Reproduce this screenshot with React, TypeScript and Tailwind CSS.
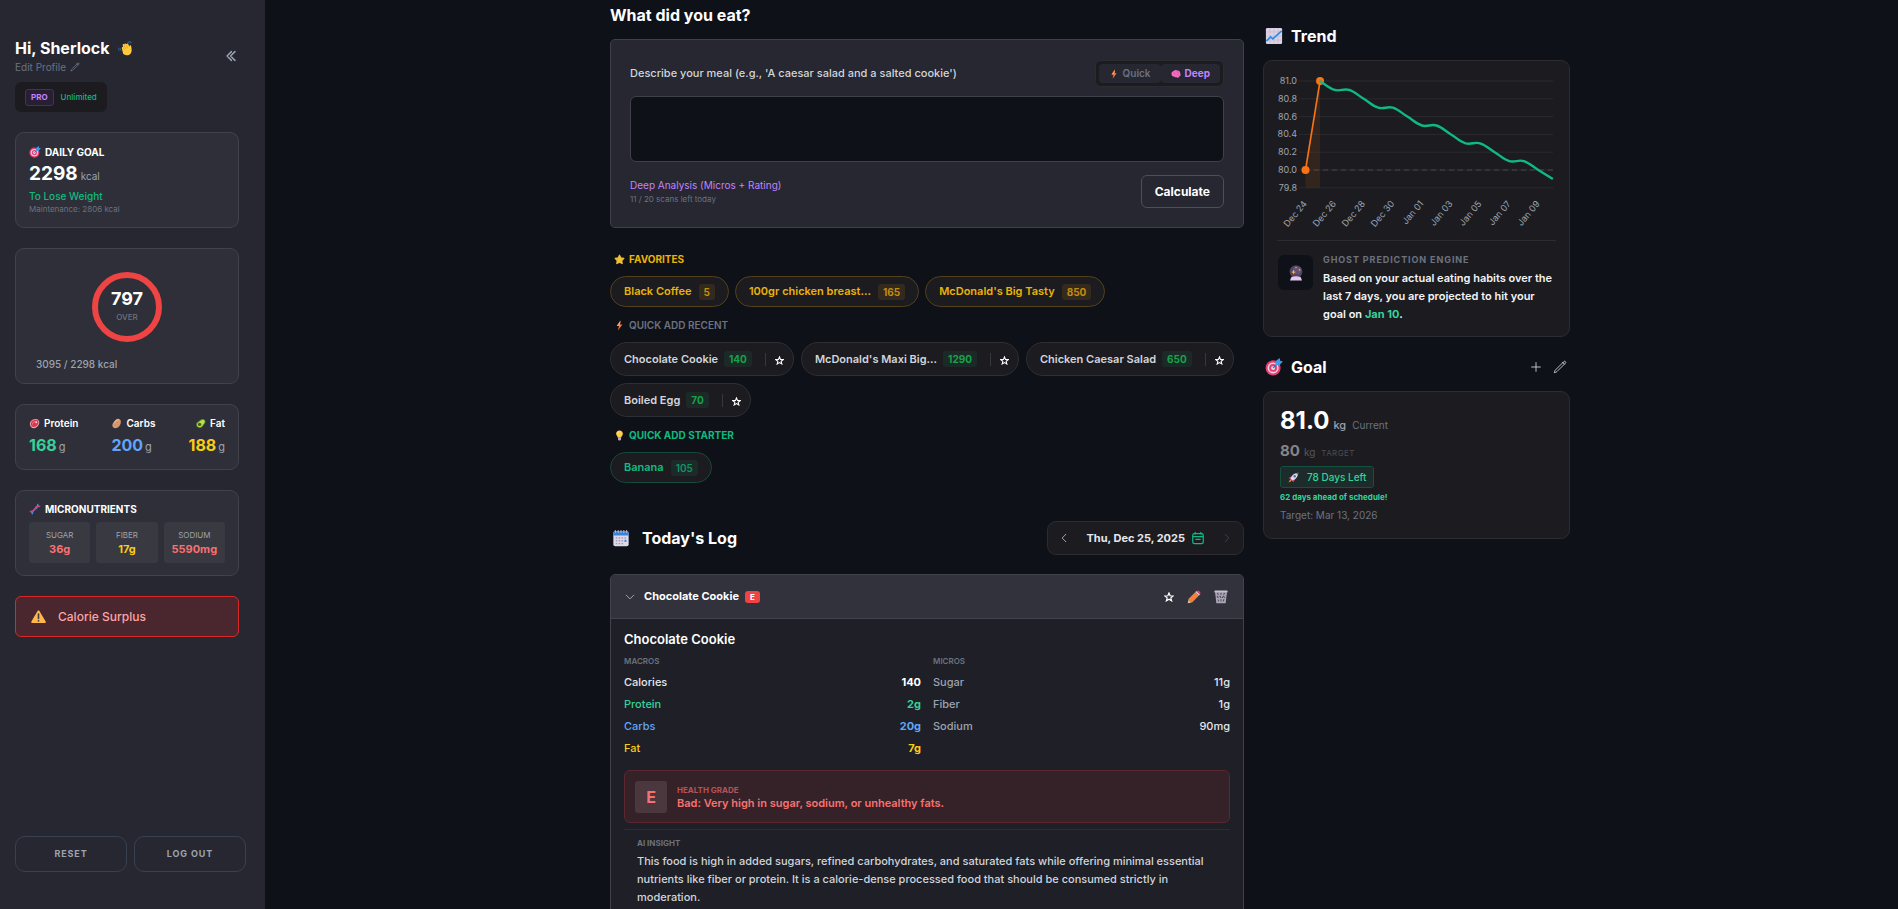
import type {ReactNode} from 'react';
import {
  HiOutlineChevronDoubleLeft,
  HiOutlineChevronDown,
  HiOutlineChevronLeft,
  HiOutlineChevronRight,
  HiOutlinePencil,
  HiOutlinePlus,
} from 'react-icons/hi2';

interface QuickItem {
  name: string;
  kcal: number;
}

interface NutrientRow {
  label: string;
  value: string;
  labelClass: string;
  valueClass: string;
}

const favorites: QuickItem[] = [
  {name: 'Black Coffee', kcal: 5},
  {name: '100gr chicken breast...', kcal: 165},
  {name: "McDonald's Big Tasty", kcal: 850},
];

const recents: QuickItem[] = [
  {name: 'Chocolate Cookie', kcal: 140},
  {name: "McDonald's Maxi Big...", kcal: 1290},
  {name: 'Chicken Caesar Salad', kcal: 650},
  {name: 'Boiled Egg', kcal: 70},
];

const macros: NutrientRow[] = [
  {label: 'Calories', value: '140', labelClass: 'text-gray-200', valueClass: 'text-white font-bold'},
  {label: 'Protein', value: '2g', labelClass: 'text-[#34d399]', valueClass: 'text-[#34d399] font-bold'},
  {label: 'Carbs', value: '20g', labelClass: 'text-[#60a5fa]', valueClass: 'text-[#60a5fa] font-bold'},
  {label: 'Fat', value: '7g', labelClass: 'text-[#facc15]', valueClass: 'text-[#facc15] font-bold'},
];

const micros: NutrientRow[] = [
  {label: 'Sugar', value: '11g', labelClass: 'text-[#9ca3af]', valueClass: 'text-gray-200 font-medium'},
  {label: 'Fiber', value: '1g', labelClass: 'text-[#9ca3af]', valueClass: 'text-gray-200 font-medium'},
  {label: 'Sodium', value: '90mg', labelClass: 'text-[#9ca3af]', valueClass: 'text-gray-200 font-medium'},
];

const sidebarCard = 'rounded-[9px] border border-[#41424b] bg-[#2e2f38]';
const panel = 'rounded-[9px] border border-[#2b2b30] bg-[#1c1c20]';

const App = () => (
  <div className="flex h-screen overflow-hidden bg-[#0e1117] font-['Inter',sans-serif] text-white">
    <Sidebar />
    <main className="flex flex-1 justify-center overflow-y-auto pl-[17px] [scrollbar-width:none]">
      <div className="flex w-full max-w-[960px] items-start gap-[19px]">
        <div className="min-w-0 flex-1 pt-[3px]">
          <MealForm />
          <QuickAdd />
          <TodaysLog />
        </div>
        <div className="w-[307px] shrink-0 pt-6">
          <Trend />
          <Goal />
        </div>
      </div>
    </main>
  </div>
);

export default App;

const Sidebar = () => (
  <aside className="flex w-[265px] shrink-0 flex-col bg-[#262730] pt-9 pl-[15px]">
    <div className="flex flex-1 flex-col gap-5 pr-[26px]">
      <div>
        <div className="flex items-center justify-between">
          <div>
            <h1 className="flex items-center gap-2 text-base leading-6 font-bold">
              Hi, Sherlock
              <WaveEmoji className="size-[15px]" />
            </h1>
            <a href="#profile" className="flex items-center gap-1 text-[10px] leading-3.5 text-[#6b7280]">
              Edit Profile
              <HiOutlinePencil className="size-2.5 stroke-2" />
            </a>
          </div>
          <button aria-label="Collapse sidebar" className="mt-0.5 mr-px text-[#9ca3af]">
            <HiOutlineChevronDoubleLeft className="size-3.5 stroke-[2.5]" />
          </button>
        </div>
        <div className="mt-2 inline-flex h-[30px] items-center gap-[7px] rounded-md bg-[#1c1c20] px-2.5 align-top">
          <span className="rounded-[3px] border border-[#4b2c66] bg-[#281f35] px-[5px] text-[8px] leading-[15px] font-bold text-[#c084fc]">
            PRO
          </span>
          <span className="text-[8px] leading-4 font-medium text-[#10b981]">Unlimited</span>
        </div>
      </div>

      <section className={`${sidebarCard} px-[13px] py-3`}>
        <h2 className="flex items-center gap-1 text-[10px] leading-3.5 font-bold">
          <TargetEmoji className="size-3" />
          DAILY GOAL
        </h2>
        <p className="mt-0.5 flex items-baseline gap-[3px] text-[19px] leading-[26px] font-bold">
          2298 <span className="text-[10px] leading-none font-normal text-[#9ca3af]">kcal</span>
        </p>
        <p className="mt-0.5 text-[10px] leading-3.5 font-medium text-[#10b981]">To Lose Weight</p>
        <p className="text-[8px] leading-3 text-[#6b7280]">Maintenance: 2806 kcal</p>
      </section>

      <section className={`${sidebarCard} px-5 pt-[23px] pb-3`}>
        <div className="mx-auto grid size-[70px] place-content-center rounded-full border-[6px] border-[#ef4444] text-center">
          <p className="text-lg leading-5 font-bold">797</p>
          <p className="text-[8px] leading-4 font-medium text-[#6b7280]">OVER</p>
        </div>
        <p className="mt-[15px] text-[10px] leading-3.5 font-medium text-[#9ca3af]">3095 / 2298 kcal</p>
      </section>

      <section className={`${sidebarCard} flex justify-between px-[13px] pt-[11px] pb-[13px]`}>
        <Macro name="Protein" value={168} color="text-[#34d399]" icon={<MeatEmoji className="size-[11px]" />} />
        <Macro name="Carbs" value={200} color="text-[#60a5fa]" icon={<PotatoEmoji className="size-[11px]" />} />
        <Macro name="Fat" value={188} color="text-[#facc15]" icon={<AvocadoEmoji className="size-[11px]" />} right />
      </section>

      <section className={`${sidebarCard} px-[13px] pt-[11px] pb-3`}>
        <h2 className="flex items-center gap-1 text-[10px] leading-3.5 font-bold">
          <DnaEmoji className="size-3" />
          MICRONUTRIENTS
        </h2>
        <div className="mt-1.5 grid grid-cols-3 gap-1.5">
          <Micro name="SUGAR" value="36g" color="text-[#f87171]" />
          <Micro name="FIBER" value="17g" color="text-[#facc15]" />
          <Micro name="SODIUM" value="5590mg" color="text-[#f87171]" />
        </div>
      </section>

      <div className="flex h-[41px] items-center gap-3 rounded-md border border-[#dc2626] bg-[#4a262e] pl-[15px]">
        <WarningEmoji className="size-[15px]" />
        <p className="text-xs font-medium text-[#fca5a5]">Calorie Surplus</p>
      </div>
    </div>

    <div className="mb-[37px] flex gap-[7px] pr-[19px]">
      <button className="h-9 flex-1 rounded-[10px] border border-[#374151] text-[9px] font-bold tracking-widest text-[#9ca3af]">
        RESET
      </button>
      <button className="h-9 flex-1 rounded-[10px] border border-[#374151] text-[9px] font-bold tracking-widest text-[#9ca3af]">
        LOG OUT
      </button>
    </div>
  </aside>
);

const Macro = ({
  name,
  value,
  color,
  icon,
  right,
}: {
  name: string;
  value: number;
  color: string;
  icon: ReactNode;
  right?: boolean;
}) => (
  <div className={right ? 'flex flex-col items-end' : 'flex flex-col items-start'}>
    <p className="flex items-center gap-1 text-[10px] leading-3.5 font-semibold">
      {icon}
      {name}
    </p>
    <p className={`mt-1 flex items-baseline gap-0.5 text-base leading-[22px] font-bold ${color}`}>
      {value}
      <span className="text-[11px] leading-none font-normal text-[#9ca3af]">g</span>
    </p>
  </div>
);

const Micro = ({name, value, color}: {name: string; value: string; color: string}) => (
  <div className="flex h-[41px] flex-col items-center justify-center rounded-[3px] bg-[#383941]">
    <p className="text-[8px] leading-3 text-[#9ca3af]">{name}</p>
    <p className={`text-[11px] leading-4 font-bold ${color}`}>{value}</p>
  </div>
);

const MealForm = () => (
  <section>
    <h2 className="text-base leading-6 font-bold">What did you eat?</h2>
    <form className="mt-3 rounded-[5px] border border-[#3f4049] bg-[#262730] px-[19px] pt-5 pb-[19px]">
      <div className="flex items-center justify-between">
        <label htmlFor="meal" className="text-[11px] font-medium text-gray-300">
          Describe your meal (e.g., 'A caesar salad and a salted cookie')
        </label>
        <div className="flex rounded-md border border-[#2b2b32] bg-[#1c1c20] p-[3px]">
          <button
            type="button"
            className="flex h-[19px] items-center gap-1 rounded bg-[#262730] px-2.5 text-[10px] font-semibold text-[#6b7280]"
          >
            <BoltEmoji className="size-2.5" />
            Quick
          </button>
          <button
            type="button"
            className="flex h-[19px] items-center gap-1 rounded bg-[#262730] px-2.5 text-[10px] font-bold text-[#c084fc]"
          >
            <BrainEmoji className="size-2.5" />
            Deep
          </button>
        </div>
      </div>
      <textarea
        id="meal"
        className="mt-[9px] block h-[66px] w-full resize-none rounded-md border border-[#3f4049] bg-[#0e1117] p-2 text-xs"
      />
      <div className="mt-[13px] flex items-center justify-between">
        <div>
          <p className="text-[10px] leading-3.5 text-[#c084fc]">Deep Analysis (Micros + Rating)</p>
          <p className="text-[8px] leading-3.5 text-[#6b7280]">11 / 20 scans left today</p>
        </div>
        <button
          type="button"
          className="h-[33px] rounded-md border border-[#4d4e57] px-[13px] text-xs font-bold"
        >
          Calculate
        </button>
      </div>
    </form>
  </section>
);

const QuickAdd = () => (
  <section>
    <h3 className="mt-6 flex items-center gap-1 pl-1 text-[10px] leading-3.5 font-bold text-[#eab308]">
      <StarEmoji className="size-[11px]" />
      FAVORITES
    </h3>
    <div className="mt-2.5 flex flex-wrap gap-1.5">
      {favorites.map(item => (
        <button
          key={item.name}
          className="flex h-[31px] items-center gap-[7px] rounded-full border border-[#54401a] bg-[#1c1c20] px-[13px] text-[11px] font-semibold text-[#eab308]"
        >
          {item.name}
          <span className="rounded-[3px] bg-[#33291d] px-[5px] text-[10px] leading-4 font-bold text-[#c48c0c]">
            {item.kcal}
          </span>
        </button>
      ))}
    </div>

    <h3 className="mt-[11px] flex items-center gap-1 pl-1 text-[10px] leading-3.5 font-semibold text-[#6b7280]">
      <BoltEmoji className="size-[11px]" />
      QUICK ADD RECENT
    </h3>
    <div className="mt-2.5 flex flex-wrap gap-[7px]">
      {recents.map(item => (
        <div
          key={item.name}
          className="flex h-[34px] items-center rounded-full border border-[#2e2e33] bg-[#1c1c20] pr-[9px] pl-[13px]"
        >
          <button className="flex items-center gap-1.5 text-[11px] font-semibold text-gray-300">
            {item.name}
            <span className="rounded-[3px] bg-[#1c2a27] px-[5px] text-[10px] leading-4 font-bold text-[#16a34a]">
              {item.kcal}
            </span>
          </button>
          <span className="ml-[13px] h-[13px] w-px bg-[#36363c]" />
          <button aria-label={`Favorite ${item.name}`} className="mt-0.5 ml-[9px]">
            <StarOutline className="size-[9px]" />
          </button>
        </div>
      ))}
    </div>

    <h3 className="mt-[11px] flex items-center gap-1 pl-1 text-[10px] leading-3.5 font-bold text-[#10b981]">
      <BulbEmoji className="size-[11px]" />
      QUICK ADD STARTER
    </h3>
    <button className="mt-2.5 flex h-[31px] items-center gap-[7px] rounded-full border border-[#16483c] bg-[#1c1c20] px-[13px] text-[11px] font-semibold text-[#10b981]">
      Banana
      <span className="rounded-[3px] bg-[#1c2a29] px-[5px] text-[10px] leading-4 font-semibold text-[#0f9468]">105</span>
    </button>
  </section>
);

const TodaysLog = () => (
  <section>
    <div className="mt-[38px] flex items-center justify-between">
      <h2 className="flex items-center gap-3 pl-0.5 text-base font-bold">
        <CalendarEmoji className="size-[18px]" />
        Today's Log
      </h2>
      <div className="flex h-[34px] items-center rounded-[9px] border border-[#2b2b30] bg-[#1c1c20] px-2.5">
        <button aria-label="Previous day" className="text-[#9ca3af]">
          <HiOutlineChevronLeft className="size-3 stroke-2" />
        </button>
        <button className="ml-4 flex items-center gap-1.5 text-[11px] font-bold text-gray-200">
          Thu, Dec 25, 2025
          <CalendarIcon />
        </button>
        <button aria-label="Next day" disabled className="ml-4 text-[#374151]">
          <HiOutlineChevronRight className="size-3 stroke-2" />
        </button>
      </div>
    </div>

    <article className="mt-[19px] overflow-hidden rounded-[5px] border border-[#41424b] bg-[#1e1f27]">
      <header className="flex h-11 items-center border-b border-[#41424b] bg-[#31323c] px-[13px]">
        <HiOutlineChevronDown className="size-3 stroke-2 text-[#9ca3af]" />
        <h3 className="ml-2 text-[11px] font-bold">Chocolate Cookie</h3>
        <span className="ml-1.5 rounded-[3px] bg-[#ef4444] px-[5px] text-[8px] leading-3 font-bold">E</span>
        <div className="mr-0.5 ml-auto flex items-center gap-[13px]">
          <button aria-label="Favorite">
            <StarOutline className="size-2.5" />
          </button>
          <button aria-label="Edit entry">
            <PencilEmoji className="size-3.5" />
          </button>
          <button aria-label="Delete entry">
            <TrashEmoji className="size-3.5" />
          </button>
        </div>
      </header>

      <div className="px-[13px] pt-[11px] pb-6">
        <h4 className="text-[13px] leading-[18px] font-semibold">Chocolate Cookie</h4>
        <div className="mt-[7px] grid grid-cols-2 items-start gap-3">
          <NutrientTable title="MACROS" rows={macros} />
          <NutrientTable title="MICROS" rows={micros} />
        </div>

        <div className="mt-[11px] flex h-[53px] items-center gap-2.5 rounded-md border border-[#5b2630] bg-[#352228] px-2.5">
          <span className="grid size-8 place-items-center rounded-[3px] bg-[#4a383e] text-base font-bold text-[#f87171]">
            E
          </span>
          <div>
            <p className="text-[8px] leading-3 font-bold text-[#b45458]">HEALTH GRADE</p>
            <p className="text-[11px] leading-3.5 font-semibold text-[#f87171]">
              Bad: Very high in sugar, sodium, or unhealthy fats.
            </p>
          </div>
        </div>

        <div className="mt-1.5 border-t border-[#2b2c34] px-[13px] pt-[7px]">
          <h5 className="text-[8px] leading-3 font-bold text-[#6b7280]">AI INSIGHT</h5>
          <p className="mt-[3px] text-[11px] leading-[18px] font-medium text-gray-300">
            This food is high in added sugars, refined carbohydrates, and saturated fats while offering minimal
            essential nutrients like fiber or protein. It is a calorie-dense processed food that should be consumed
            strictly in moderation.
          </p>
        </div>
      </div>
    </article>
  </section>
);

const NutrientTable = ({title, rows}: {title: string; rows: NutrientRow[]}) => (
  <table className="w-full text-[11px]">
    <caption className="pb-1 text-left text-[8px] leading-3 font-semibold text-[#6b7280]">{title}</caption>
    <tbody>
      {rows.map(row => (
        <tr key={row.label}>
          <th scope="row" className={`h-[22px] text-left font-medium ${row.labelClass}`}>
            {row.label}
          </th>
          <td className={`text-right ${row.valueClass}`}>{row.value}</td>
        </tr>
      ))}
    </tbody>
  </table>
);

const Trend = () => (
  <section>
    <h2 className="flex items-center gap-2 pl-0.5 text-base leading-6 font-bold">
      <ChartEmoji className="size-[18px]" />
      Trend
    </h2>
    <div className={`${panel} mt-3 px-[13px] pt-3 pb-[13px]`}>
      <WeightChart />
      <div className="mt-2.5 flex gap-2.5 border-t border-[#2b2b30] pt-3">
        <div className="mt-0.5 ml-px grid size-[35px] shrink-0 place-items-center rounded-md bg-[#0e1117]">
          <CrystalBallEmoji className="size-4" />
        </div>
        <div>
          <h3 className="text-[9px] leading-3.5 font-bold tracking-widest text-[#6b7280]">GHOST PREDICTION ENGINE</h3>
          <p className="mt-0.5 text-[11px] leading-[18px] font-semibold text-gray-100">
            Based on your actual eating habits over the last 7 days, you are projected to hit your goal on{' '}
            <span className="font-bold text-[#34d399]">Jan 10</span>.
          </p>
        </div>
      </div>
    </div>
  </section>
);

const ticks = [81.0, 80.8, 80.6, 80.4, 80.2, 80.0, 79.8];
const days = ['Dec 24', 'Dec 26', 'Dec 28', 'Dec 30', 'Jan 01', 'Jan 03', 'Jan 05', 'Jan 07', 'Jan 09'];
const projection = [81, 80.9, 80.9, 80.8, 80.7, 80.7, 80.6, 80.5, 80.5, 80.4, 80.3, 80.3, 80.2, 80.1, 80.1, 80, 79.9];

const xAt = (day: number) => 28.5 + day * 14.55;
const yAt = (kg: number) => 8 + (81 - kg) * 89;

function smoothPath(values: number[], firstDay: number) {
  const pts = values.map((kg, i) => [xAt(firstDay + i), yAt(kg)]);
  const at = (i: number) => pts[Math.min(Math.max(i, 0), pts.length - 1)];
  return pts.slice(1).reduce((d, [x, y], i) => {
    const [x0, y0] = pts[i];
    const before = at(i - 1);
    const after = at(i + 2);
    const c1 = `${x0 + (x - before[0]) * 0.2} ${y0 + (y - before[1]) * 0.2}`;
    const c2 = `${x - (after[0] - x0) * 0.2} ${y - (after[1] - y0) * 0.2}`;
    return `${d} C${c1} ${c2} ${x} ${y}`;
  }, `M${pts[0][0]} ${pts[0][1]}`);
}

const WeightChart = () => (
  <svg viewBox="0 0 279 157" className="block w-full" role="img" aria-label="Weight trend">
    {ticks.map(tick => (
      <g key={tick}>
        <line x1="22" x2="276" y1={yAt(tick)} y2={yAt(tick)} stroke="#29292e" />
        <text x="20" y={yAt(tick) + 3} textAnchor="end" fontSize="9" fill="#9ca3af">
          {tick.toFixed(1)}
        </text>
      </g>
    ))}
    <line x1="28" x2="276" y1={yAt(80)} y2={yAt(80)} stroke="#46464b" strokeDasharray="5 4" />
    {days.map((day, i) => (
      <text
        key={day}
        x={xAt(i * 2) + 2}
        y="131"
        textAnchor="end"
        fontSize="9"
        fill="#9ca3af"
        transform={`rotate(-50 ${xAt(i * 2) + 2} 131)`}
      >
        {day}
      </text>
    ))}
    <path d={`M${xAt(0)} ${yAt(80)}L${xAt(1)} ${yAt(81)}V${yAt(79.8)}H${xAt(0)}Z`} fill="#f97316" fillOpacity=".1" />
    <path d={`M${xAt(0)} ${yAt(80)}L${xAt(1)} ${yAt(81)}`} stroke="#f97316" strokeWidth="1.6" />
    <circle cx={xAt(0)} cy={yAt(80)} r="4" fill="#f97316" />
    <circle cx={xAt(1)} cy={yAt(81)} r="4" fill="#f97316" />
    <path d={smoothPath(projection, 1)} fill="none" stroke="#10b981" strokeWidth="2.4" />
  </svg>
);

const Goal = () => (
  <section className="mt-[18px]">
    <div className="flex items-center justify-between pr-[3px] pl-0.5">
      <h2 className="flex items-center gap-2 text-base leading-6 font-bold">
        <TargetEmoji className="size-[18px]" />
        Goal
      </h2>
      <div className="flex gap-2.5 text-gray-300">
        <button aria-label="Add weight">
          <HiOutlinePlus className="size-3.5" />
        </button>
        <button aria-label="Edit goal">
          <HiOutlinePencil className="size-3.5" />
        </button>
      </div>
    </div>
    <div className={`${panel} mt-3 px-4 pt-[13px] pb-[15px]`}>
      <p className="flex items-baseline text-2xl leading-8 font-bold">
        81.0
        <span className="ml-1 text-[11px] leading-none font-medium text-[#9ca3af]">kg</span>
        <span className="ml-1.5 text-[10px] leading-none font-normal text-[#6b7280]">Current</span>
      </p>
      <p className="mt-0.5 flex items-baseline text-[15px] leading-6 font-bold text-[#85858a]">
        80
        <span className="ml-1 text-[10px] leading-none font-normal text-[#55555c]">kg</span>
        <span className="ml-1.5 text-[8px] leading-none font-normal tracking-wider text-[#4b4b55]">TARGET</span>
      </p>
      <p className="mt-[3px] flex h-[22px] w-fit items-center gap-2 rounded-[3px] border border-[#13503f] bg-[#1b2c2a] px-[7px] text-[10px] font-medium text-[#34d399]">
        <RocketEmoji className="size-[11px]" />
        78 Days Left
      </p>
      <p className="mt-[3px] text-[8px] leading-3 font-bold text-[#34d399]">62 days ahead of schedule!</p>
      <p className="mt-1 text-[10px] leading-4 text-[#6b7280]">Target: Mar 13, 2026</p>
    </div>
  </section>
);

interface IconProps {
  className: string;
}

const Emoji = ({className, children}: IconProps & {children: ReactNode}) => (
  <svg viewBox="0 0 16 16" className={`shrink-0 ${className}`} aria-hidden="true">
    {children}
  </svg>
);

const StarOutline = ({className}: IconProps) => (
  <Emoji className={className}>
    <path
      d="M8 1.5l1.800 4.500 4.900.3-3.800 3.100 1.300 4.800L8 11.600l-4.200 2.600 1.300-4.800L1.300 6.300l4.900-.3z"
      fill="none"
      stroke="#fff"
      strokeWidth="1.9"
    />
  </Emoji>
);

const CalendarIcon = () => (
  <svg viewBox="0 0 16 16" className="size-3.5" fill="none" stroke="#10b981" strokeWidth="1.4" aria-hidden="true">
    <rect x="2" y="3" width="12" height="11.5" rx="2" />
    <path d="M4.800 1v3M11.200 1v3M2 6.500h12M5 9.500h6" />
  </svg>
);

const WaveEmoji = ({className}: IconProps) => (
  <Emoji className={className}>
    <path
      d="M4.200 8.200C3.600 6.600 5 6 5.600 7L5 4.600c-.3-1.500 1.300-1.800 1.800-.6-.1-1.600 1.600-1.900 2.200-.5.5-1.200 1.900-.8 2.200.3L12 6c.3-1.600 2-2 2.100-.3.4 2.700 1.100 5.400-.5 7.500-2 2.600-6.600 2.600-8.200.2z"
      fill="#ffc83d"
    />
    <path d="M6.700 4.500l1.400 3.800M9 4l1.200 3.800M5.500 7.200l1.600 2.300" stroke="#f0931e" strokeWidth=".6" />
    <path
      d="M1 7.200q-.6 1.600.4 3M2.800 8q-.4 1.200.3 2.200M10 1.200q2-.2 2.800 1.500M12 .4q1.800.3 2.400 1.800"
      stroke="#2879b8"
      strokeWidth=".9"
      fill="none"
    />
  </Emoji>
);

const TargetEmoji = ({className}: IconProps) => (
  <Emoji className={className}>
    <circle cx="7.2" cy="8.8" r="6.7" fill="#e23f73" />
    <circle cx="7.2" cy="8.8" r="4.9" fill="#e9d5e5" />
    <circle cx="7.2" cy="8.8" r="3.5" fill="#e23f73" />
    <circle cx="7.2" cy="8.8" r="1.8" fill="#e9d5e5" />
    <path d="M7.2 8.8L12 4" stroke="#2f6ea5" strokeWidth="1.1" />
    <path d="M9.400 6.400l.2-3.700L13 .1l.5 2.400 2.400.5-2.900 3.200z" fill="#3f9be8" />
  </Emoji>
);

const MeatEmoji = ({className}: IconProps) => (
  <Emoji className={className}>
    <path d="M1.200 9.200C1 5 4.500 1.500 9 1.300c4-.2 6.400 2 6 5.400-.4 4-3.300 8-7.600 8.200-3.400.2-6-2.200-6.200-5.700z" fill="#f2a1a8" />
    <path d="M2.600 8.800C2.600 5.400 5.400 2.800 9 2.600c3.200-.2 5 1.300 4.700 4-.4 3.400-2.900 6.400-6.200 6.600-2.900.2-4.900-1.600-4.900-4.400z" fill="#d9374f" />
    <path d="M5 9.500C5 6.800 7 5 9.500 4.800" stroke="#f2a1a8" fill="none" />
    <circle cx="10.500" cy="6.200" r="1.400" fill="#f8dcd8" />
  </Emoji>
);

const PotatoEmoji = ({className}: IconProps) => (
  <Emoji className={className}>
    <path d="M3 13.300C1.200 11.200 1.800 8.300 3.800 6.200 5.600 3.500 8.300.8 11.400 1.300c3 .5 3.600 3.800 2.500 7-1 3-3 5.800-6 6.300-2 .4-3.800-.1-4.900-1.300z" fill="#d99a72" />
    <path d="M5 6.500C6.700 4 9 2.200 11.200 2.600" stroke="#f3c3a2" strokeWidth="1.400" fill="none" />
    <path d="M9 6.500l.9.6M6 10l1 .4M10.500 10l.6-.4" stroke="#8d5638" strokeWidth=".9" />
  </Emoji>
);

const AvocadoEmoji = ({className}: IconProps) => (
  <Emoji className={className}>
    <path d="M1.500 9.500c0-3.300 2.500-3.700 4.500-5.500C8 2 10.600.7 13 1.700s3 4 1.600 6c-1.300 1.800-2.100 3-3.600 5-2.700 3-9.500 2.300-9.500-3.200z" fill="#3f8a28" />
    <path d="M2.900 9.500c0-2.700 2.300-3 4.200-4.800C8.700 3.100 10.800 2 12.600 2.800s2.100 2.900 1 4.400c-1.300 1.800-2.100 2.900-3.500 4.700-2.100 2.400-7.200 1.900-7.200-2.400z" fill="#b7e04c" />
    <circle cx="6.700" cy="9.300" r="2.500" fill="#6b4a22" />
  </Emoji>
);

const DnaEmoji = ({className}: IconProps) => (
  <Emoji className={className}>
    <path d="M4.500 15.200C4 11.500 5.500 9.500 8 8.200s4-3.500 3.500-7" stroke="#3d8fe0" strokeWidth="1.900" fill="none" />
    <path d="M1 11.300c4 .7 5.500-.8 6.700-3.300s3-4.200 7.300-3.300" stroke="#d0407b" strokeWidth="2" fill="none" />
    <path d="M2.800 11.800l2 2.200M5.500 10.500l1 .8M9.200 5.200l1.200.8M11.600 2.800l2 2" stroke="#8f72d8" strokeWidth="1.200" />
  </Emoji>
);

const WarningEmoji = ({className}: IconProps) => (
  <Emoji className={className}>
    <path d="M7 2.200q1-1.600 2 0l6.600 11.200q.7 1.400-.9 1.400H1.300q-1.600 0-.9-1.400z" fill="#ffb84a" />
    <path d="M8 5.500v4.700" stroke="#433b46" strokeWidth="1.700" strokeLinecap="round" />
    <circle cx="8" cy="12.600" r="1" fill="#433b46" />
  </Emoji>
);

const BoltEmoji = ({className}: IconProps) => (
  <Emoji className={className}>
    <path d="M9.500.8L4 8.600h3.200L5.800 15.400l6.400-8.700H8.700z" fill="#f5793b" />
    <path d="M9.500.8L4 8.600h3.200l1.500-1.900z" fill="#ff9d5c" />
  </Emoji>
);

const BrainEmoji = ({className}: IconProps) => (
  <Emoji className={className}>
    <path
      d="M1 9C0 6 2 3.500 4.200 3.200 6 1.300 9 1.300 10.500 2.500c2.500 0 4.300 2 4.300 4.200 1 2 .6 4.300-1.300 5-.5 2.500-3 3-4.300 1.300-1.800.6-3.500 0-4-1.200C3.200 12.300 1.500 11 1 9z"
      fill="#f56cc1"
    />
    <path d="M4 6.500c1.500-1.500 3 .5 2.500 2M8.500 4.500c2-.8 3.500.6 3 2.500M9 9.500c1.500-1 3-.5 3.500.8" stroke="#b83b90" strokeWidth=".8" fill="none" />
  </Emoji>
);

const StarEmoji = ({className}: IconProps) => (
  <Emoji className={className}>
    <path
      d="M8 1.800l2 3.900 4.300.7-3 3.100.6 4.400L8 12l-3.900 1.900.6-4.400-3-3.100 4.300-.7z"
      fill="#efc13a"
      stroke="#efc13a"
      strokeWidth="1.800"
      strokeLinejoin="round"
    />
  </Emoji>
);

const BulbEmoji = ({className}: IconProps) => (
  <Emoji className={className}>
    <path d="M8 .8c3 0 4.900 2.200 4.900 4.800 0 2.400-2 3.500-2.500 5.600H5.600C5.100 9.100 3.100 8 3.100 5.600 3.100 3 5 .8 8 .8z" fill="#ffcf4a" />
    <path d="M5 5.500C5 4 6 2.800 7.500 2.600" stroke="#fff1b8" fill="none" />
    <path d="M5.800 11.200h4.400v2.600q0 1.400-2.200 1.400t-2.200-1.400z" fill="#b9a8c4" />
  </Emoji>
);

const CalendarEmoji = ({className}: IconProps) => (
  <Emoji className={className}>
    <rect x="1.200" y="2" width="13.600" height="13.300" rx="1.700" fill="#dfd8ea" />
    <path d="M1.200 5.800V3.500Q1.200 2 2.800 2h10.400q1.600 0 1.600 1.500v2.300z" fill="#3285dd" />
    <path d="M3 .8v2.800M5.500.8v2.800M8 .8v2.800M10.500.8v2.800M13 .8v2.800" stroke="#b7b2cc" strokeWidth=".9" />
    <path d="M3.300 8h9.400M3.300 10.500h9.400M3.300 13h7" stroke="#a19dba" strokeWidth="1.300" strokeDasharray="1.400 1.200" />
    <path d="M11.200 10.500h1.600" stroke="#3285dd" strokeWidth="1.700" />
  </Emoji>
);

const PencilEmoji = ({className}: IconProps) => (
  <Emoji className={className}>
    <path d="M.8 15.200l1-4.300 3.300 3.300z" fill="#e9c39d" />
    <path d="M1.400 10.500L9.600 2.300 13.700 6.400l-8.200 8.200z" fill="#f5813c" />
    <path d="M9.600 2.300l1.200-1.200 4.100 4.100-1.200 1.200z" fill="#d5cfe0" />
    <path d="M10.800 1.100q1.700-1.500 3.500.4t.6 3.700z" fill="#e8434f" />
  </Emoji>
);

const TrashEmoji = ({className}: IconProps) => (
  <Emoji className={className}>
    <path d="M1.200 2.500h13.600l-1.500 12.700H2.700z" fill="#aaa5b5" />
    <path
      d="M4 3.500l1 2M8 3.500v2M12 3.500l-1 2M3.500 7l1.500 2M6.500 6.500L8 9M9.500 9L11 6.500M4.500 11l1 2M8 10.500v2.500M11.500 10.500l-1 2.500M12.500 7.500l-.5 1.500"
      stroke="#484655"
      strokeWidth="1.200"
    />
    <rect x=".4" y=".6" width="15.200" height="2.300" rx="1" fill="#c6c1d0" />
  </Emoji>
);

const ChartEmoji = ({className}: IconProps) => (
  <Emoji className={className}>
    <rect x=".8" y=".8" width="14.400" height="14.400" rx="1.200" fill="#ded3e6" />
    <path d="M4.400 1v14M8 1v14M11.600 1v14M1 4.400h14M1 8h14M1 11.600h14" stroke="#c4b6d1" strokeWidth=".6" />
    <path d="M1.200 12.600L5 8.800l2 1.800 7.800-7.200" stroke="#2b8de0" strokeWidth="1.400" fill="none" />
  </Emoji>
);

const CrystalBallEmoji = ({className}: IconProps) => (
  <Emoji className={className}>
    <circle cx="8" cy="6.600" r="6.400" fill="#51455f" />
    <circle cx="9" cy="5.500" r="4" fill="#62536f" />
    <path d="M3.200 12.200q4.800-2 9.600 0l1.200 3.200H2z" fill="#e2c9ee" />
    <path
      d="M5.500 4.600l.7 1.800 1.800.7-1.800.7-.7 1.800-.7-1.800L3 7.100l1.800-.7zM11.500 3.500l.4 1 1 .4-1 .4-.4 1-.4-1-1-.4 1-.4zM8 1.500l.3.8.8.3-.8.3-.3.8-.3-.8-.8-.3.8-.3z"
      fill="#ffb547"
    />
  </Emoji>
);

const RocketEmoji = ({className}: IconProps) => (
  <Emoji className={className}>
    <path d="M5 6L.8 8.800l3 1.600zM10 11.500l-2.600 3.800-1.700-3z" fill="#e0335c" />
    <path d="M3.600 9.700C4.500 5.500 8.500 1.500 15 1c-.5 6.500-4.500 10.500-8.700 11.400z" fill="#dcd6e8" />
    <path d="M11.500 1.700C12.600 1.300 13.800 1 15 1c0 1.200-.3 2.400-.7 3.500z" fill="#e0335c" />
    <circle cx="9.800" cy="6.200" r="1.700" fill="#4a6bb5" />
    <path d="M3.500 10.500l2 2-1.800 1.200L.8 15.200l1.500-3z" fill="#ff8a3c" />
  </Emoji>
);
